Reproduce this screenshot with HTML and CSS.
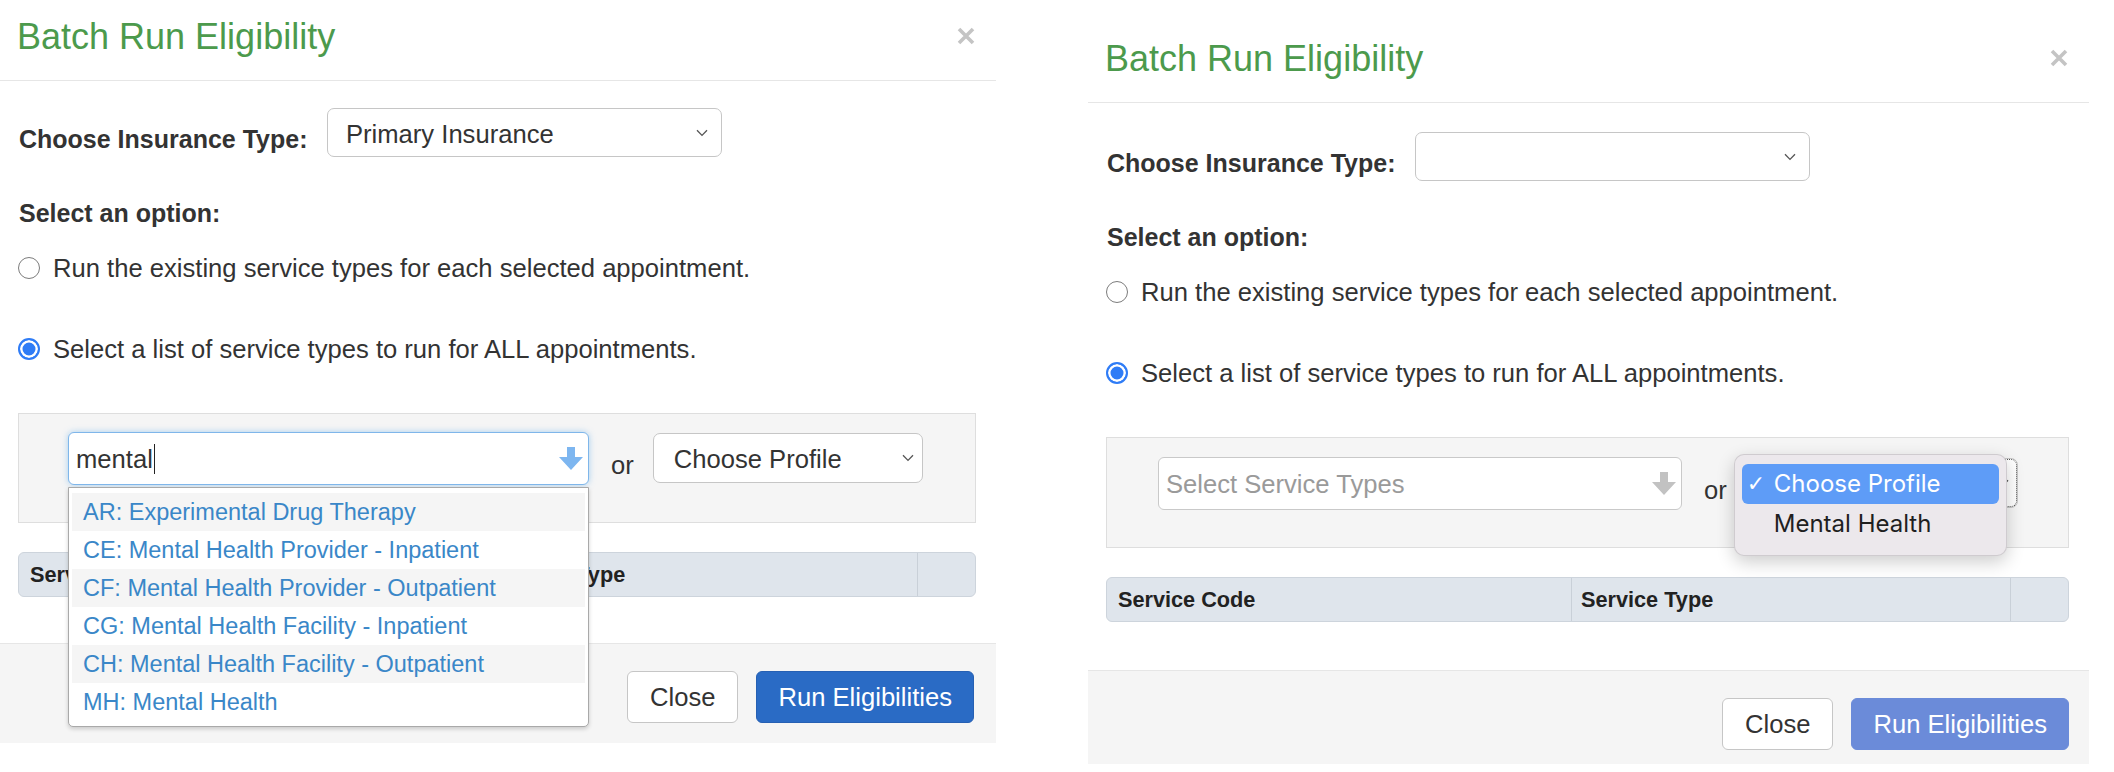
FILE: index.html
```html
<!DOCTYPE html>
<html lang="en">
<head>
<meta charset="utf-8">
<title>Batch Run Eligibility</title>
<link rel="stylesheet" href="styles.css">
</head>
<body>
<div class="stage">

  <section class="modal modal-left">
    <header class="modal-header">
      <h4 class="modal-title">Batch Run Eligibility</h4>
      <svg class="close" width="18" height="18" viewBox="0 0 18 18" aria-label="Close"><path d="M2 2 L16 16 M16 2 L2 16" stroke="#c4c4c4" stroke-width="3.6" stroke-linecap="butt"/></svg>
    </header>
    <div class="modal-body">
      <div class="ins-row">
        <label class="field-label">Choose Insurance Type:</label>
        <div class="select ins-select">
          <span class="select-text">Primary Insurance</span>
          <svg class="chev" width="12" height="8" viewBox="0 0 12 8"><path d="M1 1.2 L6 6.4 L11 1.2" fill="none" stroke="#555" stroke-width="1.3"/></svg>
        </div>
      </div>
      <div class="section-label">Select an option:</div>
      <div class="radio-row row-one"><span class="radio"></span><span class="radio-text">Run the existing service types for each selected appointment.</span></div>
      <div class="radio-row row-two"><span class="radio checked"></span><span class="radio-text">Select a list of service types to run for ALL appointments.</span></div>
      <div class="well">
        <div class="picker">
          <div class="svc-input focused">
            <span class="typed">mental</span><span class="caret"></span>
            <svg class="down-arrow" width="24" height="23" viewBox="0 0 24 23"><path d="M8 0 H16 V10 H24 L12 23 L0 10 H8 Z" fill="#7db6f0"/></svg>
          </div>
          <ul class="suggest">
            <li class="alt">AR: Experimental Drug Therapy</li>
            <li>CE: Mental Health Provider - Inpatient</li>
            <li class="alt">CF: Mental Health Provider - Outpatient</li>
            <li>CG: Mental Health Facility - Inpatient</li>
            <li class="alt">CH: Mental Health Facility - Outpatient</li>
            <li>MH: Mental Health</li>
          </ul>
        </div>
        <span class="or">or</span>
        <div class="select profile-select">
          <span class="select-text">Choose Profile</span>
          <svg class="chev" width="12" height="8" viewBox="0 0 12 8"><path d="M1 1.2 L6 6.4 L11 1.2" fill="none" stroke="#555" stroke-width="1.3"/></svg>
        </div>
      </div>
      <div class="table-head">
        <div class="th c1">Service Code</div>
        <div class="th c2">Service Type</div>
        <div class="th c3"></div>
      </div>
    </div>
    <footer class="modal-footer">
      <button class="btn btn-default">Close</button>
      <button class="btn btn-primary">Run Eligibilities</button>
    </footer>
  </section>

  <section class="modal modal-right">
    <header class="modal-header">
      <h4 class="modal-title">Batch Run Eligibility</h4>
      <svg class="close" width="18" height="18" viewBox="0 0 18 18" aria-label="Close"><path d="M2 2 L16 16 M16 2 L2 16" stroke="#c4c4c4" stroke-width="3.6" stroke-linecap="butt"/></svg>
    </header>
    <div class="modal-body">
      <div class="ins-row">
        <label class="field-label">Choose Insurance Type:</label>
        <div class="select ins-select">
          <span class="select-text"></span>
          <svg class="chev" width="12" height="8" viewBox="0 0 12 8"><path d="M1 1.2 L6 6.4 L11 1.2" fill="none" stroke="#555" stroke-width="1.3"/></svg>
        </div>
      </div>
      <div class="section-label">Select an option:</div>
      <div class="radio-row row-one"><span class="radio"></span><span class="radio-text">Run the existing service types for each selected appointment.</span></div>
      <div class="radio-row row-two"><span class="radio checked"></span><span class="radio-text">Select a list of service types to run for ALL appointments.</span></div>
      <div class="well">
        <div class="picker">
          <div class="svc-input">
            <span class="placeholder">Select Service Types</span>
            <svg class="down-arrow" width="24" height="23" viewBox="0 0 24 23"><path d="M8 0 H16 V10 H24 L12 23 L0 10 H8 Z" fill="#c2c2c2"/></svg>
          </div>
        </div>
        <span class="or">or</span>
        <div class="select profile-select is-open">
          <svg class="chev" width="12" height="8" viewBox="0 0 12 8"><path d="M1 1.2 L6 6.4 L11 1.2" fill="none" stroke="#555" stroke-width="1.3"/></svg>
          <div class="native-menu">
            <div class="menu-item active"><span class="check">✓</span>Choose Profile</div>
            <div class="menu-item">Mental Health</div>
          </div>
        </div>
      </div>
      <div class="table-head">
        <div class="th c1">Service Code</div>
        <div class="th c2">Service Type</div>
        <div class="th c3"></div>
      </div>
    </div>
    <footer class="modal-footer">
      <button class="btn btn-default">Close</button>
      <button class="btn btn-primary is-disabled">Run Eligibilities</button>
    </footer>
  </section>

</div>
</body>
</html>
```

FILE: styles.css
```css
* { box-sizing: border-box; }

html, body {
  margin: 0;
  padding: 0;
  background: #fff;
}

body {
  font-family: "Liberation Sans", Arial, Helvetica, sans-serif;
  font-size: 25.6px;
  line-height: 30px;
  color: #333;
}

.stage {
  display: flex;
  align-items: flex-start;
  width: 2114px;
  height: 772px;
  overflow: hidden;
}

.modal {
  background: #fff;
  position: relative;
  flex: none;
}

.modal-left { width: 996px; }

.modal-right {
  width: 1001px;
  margin-left: 92px;
  margin-top: 22px;
}

/* header */
.modal-header {
  display: flex;
  justify-content: space-between;
  align-items: flex-start;
  padding: 17px 21px 23px 17px;
  border-bottom: 1px solid #e6e6e6;
}

.modal-title {
  margin: 0;
  font-size: 36px;
  line-height: 40px;
  font-weight: normal;
  color: #4c9a4c;
}

.close {
  margin-top: 10px;
  flex: none;
}

/* body */
.modal-body {
  padding: 27px 20px 0 18px;
}

.modal-right .modal-body { padding-top: 29px; }

.ins-row {
  display: flex;
  align-items: flex-start;
}

.field-label {
  flex: 0 0 309px;
  margin-top: 16px;
  font-weight: bold;
  font-size: 25px;
  padding-left: 1px;
}

.select {
  position: relative;
  display: flex;
  align-items: center;
  background: #fff;
  border: 1px solid #c6c6c6;
  border-radius: 7px;
}

.select-text {
  padding-top: 2px;
  color: #333;
  white-space: nowrap;
}

.select .chev {
  position: absolute;
  top: 50%;
  margin-top: -4px;
}

.ins-select {
  width: 395px;
  height: 49px;
  padding-left: 18px;
}

.ins-select .chev { right: 13px; }

.section-label {
  margin-top: 41px;
  font-weight: bold;
  font-size: 25px;
  padding-left: 1px;
}

.radio-row {
  display: flex;
  align-items: center;
  gap: 13px;
}

.row-one { margin-top: 25px; }
.row-two { margin-top: 51px; }

.radio {
  flex: none;
  width: 22px;
  height: 22px;
  border-radius: 50%;
  border: 1.5px solid #7c7c7c;
  background: #fff;
}

.radio.checked {
  border: 2px solid #2f7cf6;
  background: #2f7cf6;
  box-shadow: inset 0 0 0 2.5px #fff;
}

/* service type well */
.well {
  margin-top: 49px;
  display: flex;
  align-items: flex-start;
  background: #f5f5f5;
  border: 1px solid #dedede;
  padding: 18px 0 37px 49px;
}

.modal-right .well { padding-left: 51px; padding-top: 19px; }

.picker {
  position: relative;
  flex: none;
}

.svc-input {
  position: relative;
  display: flex;
  align-items: center;
  width: 521px;
  height: 53px;
  background: #fff;
  border: 1px solid #c9c9c9;
  border-radius: 6px;
  padding-left: 7px;
}

.modal-right .svc-input { width: 524px; }

.svc-input.focused {
  border-color: #7fb6ea;
  box-shadow: 0 0 6px rgba(102, 175, 233, 0.55);
}

.typed { color: #333; }

.caret {
  display: inline-block;
  width: 1.5px;
  height: 30px;
  background: #222;
  margin-left: 1px;
}

.placeholder { color: #9a9a9a; }

.down-arrow {
  position: absolute;
  right: 5px;
  top: 14px;
}

.suggest {
  position: absolute;
  z-index: 5;
  top: 55px;
  left: 0;
  width: 521px;
  margin: 0;
  padding: 5px 3px;
  list-style: none;
  background: #fff;
  border: 1px solid #a9a9a9;
  border-radius: 0 0 5px 5px;
  box-shadow: 0 2px 4px rgba(0, 0, 0, 0.18);
}

.suggest li {
  height: 38px;
  line-height: 38px;
  padding-left: 11px;
  font-size: 23.5px;
  color: #3a87c8;
  white-space: nowrap;
}

.suggest li.alt { background: #f5f5f5; }

.or {
  margin: 18px 0 0 22px;
  flex: none;
}

.profile-select {
  margin: 1px 0 0 19px;
  width: 270px;
  height: 50px;
  padding-left: 20px;
}

.modal-right .profile-select { width: 272px; }

.profile-select .chev { right: 8px; }

.profile-select.is-open {
  outline: 1.5px dotted #555;
  outline-offset: -2px;
}

/* native popup menu */
.native-menu {
  position: absolute;
  z-index: 6;
  left: -13px;
  top: -5px;
  width: 273px;
  height: 102px;
  padding: 9px 7px;
  background: #ece8ec;
  border: 1px solid rgba(0, 0, 0, 0.12);
  border-radius: 10px;
  box-shadow: 0 6px 18px rgba(0, 0, 0, 0.2);
  font-family: "Inter", "Liberation Sans", sans-serif;
  font-size: 24px;
}

.menu-item {
  position: relative;
  height: 40px;
  line-height: 40px;
  padding-left: 32px;
  border-radius: 6px;
  color: #1f1f1f;
  white-space: nowrap;
}

.menu-item.active {
  background: #5e9cf7;
  color: #fff;
}

.check {
  position: absolute;
  left: 5px;
  top: 0;
  font-family: "DejaVu Sans", sans-serif;
  font-size: 22px;
}

/* table header */
.table-head {
  margin-top: 29px;
  display: flex;
  height: 45px;
  background: #dfe5ec;
  border: 1px solid #cdd4dc;
  border-radius: 6px;
  font-weight: bold;
  font-size: 21.7px;
}

.th {
  display: flex;
  align-items: center;
  padding-left: 11px;
  color: #222;
}

.c1 { flex: 0 0 465px; border-right: 1px solid #c9d0d8; }
.c2 { flex: 1; border-right: 1px solid #c9d0d8; padding-left: 9px; }
.c3 { flex: 0 0 57px; }

/* footer */
.modal-footer {
  margin-top: 46px;
  display: flex;
  justify-content: flex-end;
  gap: 18px;
  padding: 27px 22px 20px;
  background: #f5f5f5;
  border-top: 1px solid #e6e6e6;
}

.modal-right .modal-footer {
  margin-top: 48px;
  padding-bottom: 14px;
  padding-right: 20px;
}

.btn {
  height: 52px;
  padding: 0 21px;
  font-family: inherit;
  font-size: 25.6px;
  border-radius: 6px;
  border: 1px solid #c6c6c6;
  cursor: pointer;
}

.btn-default {
  background: #fff;
  color: #333;
  padding: 0 22px;
}

.btn-primary {
  background: #2a6bc5;
  border-color: #2660b3;
  color: #fff;
}

.btn-primary.is-disabled {
  background: #6b8bd9;
  border-color: #6b8bd9;
}
```
